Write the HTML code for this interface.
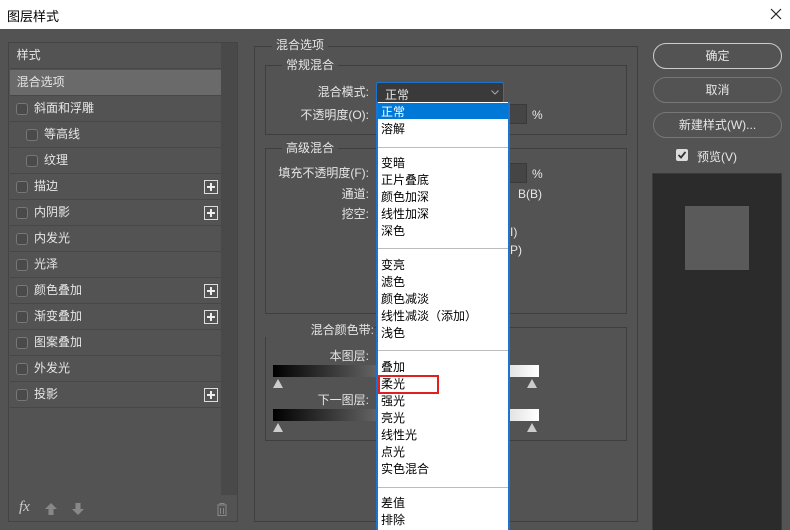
<!DOCTYPE html>
<html style="overflow:hidden;height:530px"><head><meta charset="utf-8"><style>
*{margin:0;padding:0;box-sizing:border-box}
body{width:790px;height:530px;background:#535353;position:relative;overflow:hidden;font-family:"Liberation Sans","Noto Sans CJK SC",sans-serif;font-size:12px;color:#e6e6e6}
.a{position:absolute;white-space:nowrap}
.title{top:0;left:0;width:790px;height:29px;background:#fff;color:#000}
.lp{left:8px;top:42px;width:230px;height:480px;border:1px solid #444}
.row{position:absolute;left:1px;width:211px;height:26px;border-bottom:1px solid #474747;line-height:25px}
.cb{position:absolute;width:12px;height:12px;border:1px solid #777;border-radius:3px;background:#4a4a4a;top:7px}
.plus{position:absolute;left:194px;top:6px;width:14px;height:14px;border:1px solid #ddd}
.plus:before{content:"";position:absolute;left:2px;top:5px;width:8px;height:2px;background:#eee}
.plus:after{content:"";position:absolute;left:5px;top:2px;width:2px;height:8px;background:#eee}
.box{position:absolute;border:1px solid #3e3e3e}
.lbl{position:absolute;background:#535353;padding:0 4px;line-height:14px}
.r{position:absolute;text-align:right;line-height:14px}
.btn{position:absolute;left:653px;width:129px;height:26px;border:1px solid #777;border-radius:13px;text-align:center;line-height:24px}
.menu{position:absolute;left:376px;top:102px;width:134px;height:428px;background:#fff;border:2px solid #1b74d0;border-top:0;border-bottom:0;color:#000;font-size:12px;overflow:hidden}
.mi{position:absolute;left:3px;line-height:16px}
.sep{position:absolute;left:0;width:130px;height:1px;background:#bcbcbc}
.grad{position:absolute;left:273px;width:266px;height:12px;background:linear-gradient(90deg,#000,#fff)}
.tri{position:absolute;width:0;height:0;border-left:5px solid transparent;border-right:5px solid transparent;border-bottom:9px solid #ccc}
</style></head><body>
<div class="a title"><span class="a" style="left:7px;top:6px;font-size:13px">图层样式</span>
<svg class="a" style="left:770px;top:8px" width="12" height="12"><path d="M1 1L11 11M11 1L1 11" stroke="#222" stroke-width="1.2"/></svg></div>

<div class="a lp">
<div class="a" style="left:212px;top:0;width:16px;height:452px;background:#494949"></div>
<div class="row" style="top:0">&nbsp;&nbsp;样式</div>
<div class="row" style="top:27px;background:#6a6a6a">&nbsp;&nbsp;混合选项</div>
<div class="row" style="top:53px"><span class="cb" style="left:6px"></span><span class="a" style="left:24px">斜面和浮雕</span></div>
<div class="row" style="top:79px"><span class="cb" style="left:16px"></span><span class="a" style="left:34px">等高线</span></div>
<div class="row" style="top:105px"><span class="cb" style="left:16px"></span><span class="a" style="left:34px">纹理</span></div>
<div class="row" style="top:131px"><span class="cb" style="left:6px"></span><span class="a" style="left:24px">描边</span><span class="plus"></span></div>
<div class="row" style="top:157px"><span class="cb" style="left:6px"></span><span class="a" style="left:24px">内阴影</span><span class="plus"></span></div>
<div class="row" style="top:183px"><span class="cb" style="left:6px"></span><span class="a" style="left:24px">内发光</span></div>
<div class="row" style="top:209px"><span class="cb" style="left:6px"></span><span class="a" style="left:24px">光泽</span></div>
<div class="row" style="top:235px"><span class="cb" style="left:6px"></span><span class="a" style="left:24px">颜色叠加</span><span class="plus"></span></div>
<div class="row" style="top:261px"><span class="cb" style="left:6px"></span><span class="a" style="left:24px">渐变叠加</span><span class="plus"></span></div>
<div class="row" style="top:287px"><span class="cb" style="left:6px"></span><span class="a" style="left:24px">图案叠加</span></div>
<div class="row" style="top:313px"><span class="cb" style="left:6px"></span><span class="a" style="left:24px">外发光</span></div>
<div class="row" style="top:339px"><span class="cb" style="left:6px"></span><span class="a" style="left:24px">投影</span><span class="plus"></span></div>
<span class="a" style="left:10px;top:456px;font-style:italic;font-family:'Liberation Serif',serif;font-size:15px;color:#ccc">fx</span>
<svg class="a" style="left:36px;top:460px" width="12" height="12"><path d="M6 0L12 6H8.5V12H3.5V6H0Z" fill="#888"/></svg>
<svg class="a" style="left:63px;top:460px" width="12" height="12"><path d="M6 12L12 6H8.5V0H3.5V6H0Z" fill="#888"/></svg>
<svg class="a" style="left:207px;top:460px" width="12" height="13"><path d="M1 2H11M4 2V0.5H8V2M2 3V12.5H10V3M4.5 5V11M7.5 5V11" stroke="#888" fill="none"/></svg>
</div>

<div class="box" style="left:254px;top:46px;width:384px;height:476px"></div>
<span class="lbl" style="left:272px;top:38px">混合选项</span>
<div class="box" style="left:265px;top:65px;width:362px;height:70px"></div>
<span class="lbl" style="left:282px;top:58px">常规混合</span>
<div class="r" style="left:260px;width:109px;top:85px">混合模式:</div>
<div class="r" style="left:260px;width:109px;top:108px">不透明度(O):</div>
<div class="a" style="left:507px;top:104px;width:20px;height:20px;background:#454545;border:1px solid #3a3a3a"></div>
<span class="a" style="left:532px;top:108px">%</span>
<div class="box" style="left:265px;top:148px;width:362px;height:166px"></div>
<span class="lbl" style="left:282px;top:141px">高级混合</span>
<div class="r" style="left:260px;width:109px;top:166px">填充不透明度(F):</div>
<div class="a" style="left:507px;top:163px;width:20px;height:20px;background:#454545;border:1px solid #3a3a3a"></div>
<span class="a" style="left:532px;top:167px">%</span>
<div class="r" style="left:260px;width:109px;top:187px">通道:</div>
<span class="a" style="left:518px;top:187px">B(B)</span>
<div class="r" style="left:260px;width:109px;top:207px">挖空:</div>
<span class="a" style="left:510px;top:225px">I)</span>
<span class="a" style="left:510px;top:243px">P)</span>
<div class="box" style="left:265px;top:327px;width:362px;height:114px"></div>
<div class="r" style="left:260px;width:114px;top:323px;background:#535353">混合颜色带:</div>
<div class="r" style="left:260px;width:109px;top:349px">本图层:</div>
<div class="grad" style="top:365px"></div>
<div class="tri" style="left:273px;top:379px"></div><div class="tri" style="left:527px;top:379px"></div>
<div class="r" style="left:260px;width:109px;top:393px">下一图层:</div>
<div class="grad" style="top:409px"></div>
<div class="tri" style="left:273px;top:423px"></div><div class="tri" style="left:527px;top:423px"></div>

<div class="a" style="left:376px;top:82px;width:128px;height:21px;background:#3a3a3a;border:1px solid #1b74d0;border-radius:2px"><span class="a" style="left:8px;top:3px">正常</span>
<svg class="a" style="left:114px;top:7px" width="8" height="5"><path d="M0.5 0.5L4 4L7.5 0.5" stroke="#aaa" fill="none"/></svg></div>

<div class="menu">
<div class="a" style="left:0;top:1px;width:130px;height:16px;background:#0078d7"></div>
<span class="mi" style="top:2px;color:#fff">正常</span>
<span class="mi" style="top:19px">溶解</span>
<div class="sep" style="top:45px"></div>
<span class="mi" style="top:53px">变暗</span>
<span class="mi" style="top:70px">正片叠底</span>
<span class="mi" style="top:87px">颜色加深</span>
<span class="mi" style="top:104px">线性加深</span>
<span class="mi" style="top:121px">深色</span>
<div class="sep" style="top:146px"></div>
<span class="mi" style="top:155px">变亮</span>
<span class="mi" style="top:172px">滤色</span>
<span class="mi" style="top:189px">颜色减淡</span>
<span class="mi" style="top:206px">线性减淡（添加）</span>
<span class="mi" style="top:223px">浅色</span>
<div class="sep" style="top:248px"></div>
<span class="mi" style="top:257px">叠加</span>
<div class="a" style="left:0;top:273px;width:61px;height:19px;border:2px solid #e02020"></div>
<span class="mi" style="top:274px">柔光</span>
<span class="mi" style="top:291px">强光</span>
<span class="mi" style="top:308px">亮光</span>
<span class="mi" style="top:325px">线性光</span>
<span class="mi" style="top:342px">点光</span>
<span class="mi" style="top:359px">实色混合</span>
<div class="sep" style="top:385px"></div>
<span class="mi" style="top:393px">差值</span>
<span class="mi" style="top:410px">排除</span>
</div>

<div class="btn" style="top:43px;border-color:#ccc">确定</div>
<div class="btn" style="top:77px">取消</div>
<div class="btn" style="top:112px">新建样式(W)...</div>
<div class="a" style="left:676px;top:149px;width:12px;height:12px;background:#ddd;border-radius:2px"></div>
<svg class="a" style="left:678px;top:151px" width="8" height="8"><path d="M0.5 4L3 6.5L7.5 1" stroke="#333" stroke-width="1.8" fill="none"/></svg>
<span class="a" style="left:697px;top:148px">预览(V)</span>
<div class="a" style="left:652px;top:173px;width:130px;height:360px;background:#2b2b2b;border:1px solid #3a3a3a"></div>
<div class="a" style="left:685px;top:206px;width:64px;height:64px;background:#5a5a5a"></div>
</body></html>
